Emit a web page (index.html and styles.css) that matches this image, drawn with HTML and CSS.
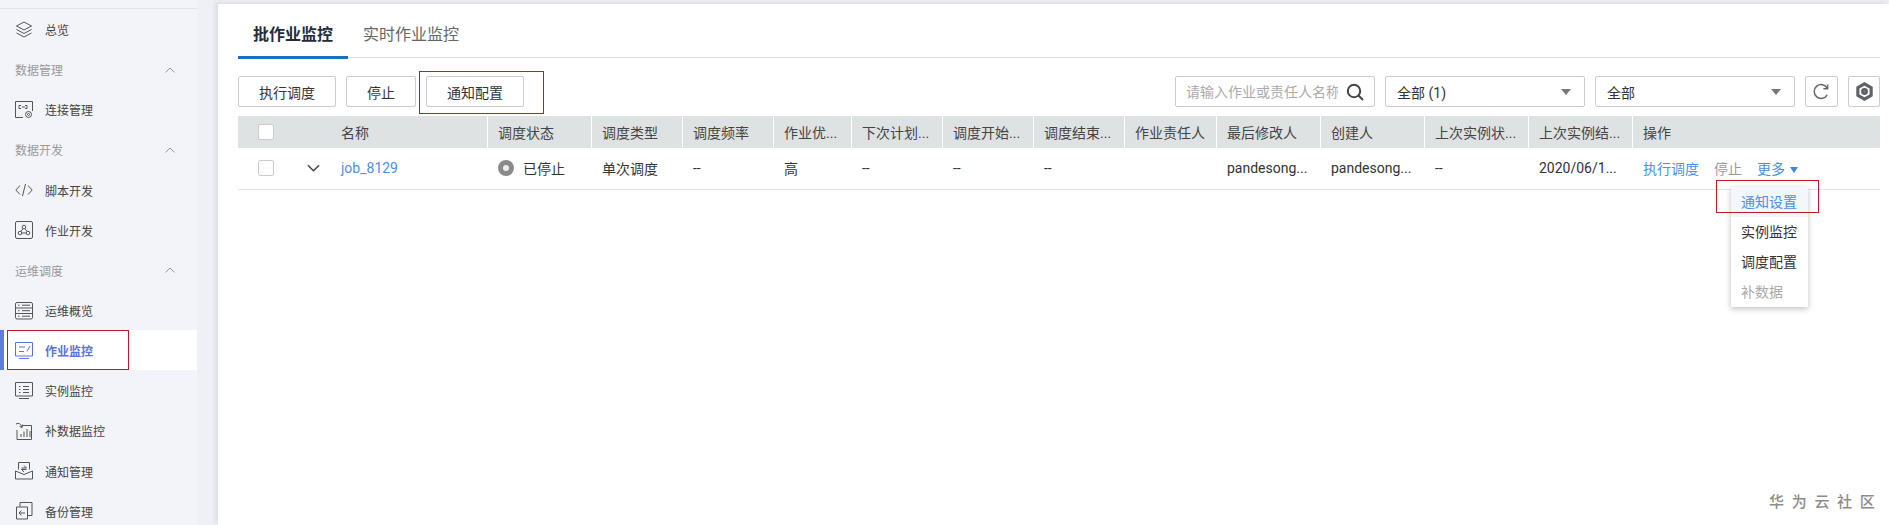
FILE: index.html
```html
<!DOCTYPE html>
<html lang="zh">
<head>
<meta charset="utf-8">
<title>作业监控</title>
<link rel="stylesheet" href="styles.css">
</head>
<body>
<div class="app">
  <aside class="side">
    <div class="item"><svg class="ic" viewBox="0 0 18 18"><path d="M9 1 16.500 5 9 9 1.500 5Z M1.500 8.500 9 12.500 16.500 8.500 M1.500 12 9 16 16.500 12"/></svg>总览</div>
    <div class="group">数据管理<svg class="chev" viewBox="0 0 10 6"><path d="M.5 5.500 5 1l4.500 4.500"/></svg></div>
    <div class="item"><svg class="ic" viewBox="0 0 18 18"><path d="M8 16.500H.5V.5h17V10M4 6V4.500h2M12 6V4.500h-2M4 6v1.500h2M12 6v1.500h-2M7 6h3"/><circle cx="13.500" cy="13.500" r="3"/><circle cx="13.500" cy="13.500" r="1"/></svg>连接管理</div>
    <div class="group">数据开发<svg class="chev" viewBox="0 0 10 6"><path d="M.5 5.500 5 1l4.500 4.500"/></svg></div>
    <div class="item"><svg class="ic" viewBox="0 0 18 18"><path d="M5 4.500.8 9 5 13.500M13 4.500 17.200 9 13 13.500M10.500 3 7.500 15"/></svg>脚本开发</div>
    <div class="item"><svg class="ic" viewBox="0 0 18 18"><rect x=".5" y=".5" width="17" height="17" rx="1.500"/><circle cx="9" cy="6" r="1.800"/><circle cx="5" cy="12" r="1.800"/><circle cx="13" cy="12" r="1.800"/><path d="M8 7.500 6 10.500M10 7.500l2 3M6.800 12h4.400"/></svg>作业开发</div>
    <div class="group">运维调度<svg class="chev" viewBox="0 0 10 6"><path d="M.5 5.500 5 1l4.500 4.500"/></svg></div>
    <div class="item"><svg class="ic" viewBox="0 0 18 18"><rect x=".5" y=".5" width="17" height="16.500" rx="1.500"/><path d="M.5 6h17M.5 11.500h17M3 3.200h1.500M7 3.200h8M3 8.700h1.500M7 8.700h8M3 14.200h1.500M7 14.200h8"/></svg>运维概览</div>
    <div class="item active"><svg class="ic" viewBox="0 0 18 18"><path d="M.5 14V.5h17V14ZM4 16.500h10M4 5h6M4 9.500h5M15 4l-3 5.500"/></svg>作业监控</div>
    <div class="item"><svg class="ic" viewBox="0 0 18 18"><path d="M.5 14V.5h17V14ZM4 16.500h10M4 4.500h1.500M8 4.500h6M4 7.500h1.500M8 7.500h6M4 10.500h1.500M8 10.500h6"/></svg>实例监控</div>
    <div class="item"><svg class="ic" viewBox="0 0 18 18"><path d="M7 3.500h9.500v14H2V8M1 2c3-1.500 5 0 6 3.500M7.500 2.500 7 5.500 4.500 4.500M6 15v-3M9 15V9.500M12 15V7M15 15V9"/></svg>补数据监控</div>
    <div class="item"><svg class="ic" viewBox="0 0 18 18"><path d="M3.500 7.500V.5h11v7M.5 9v8h17V9L9 12.500ZM6.500 6h5L9 3.500M11.500 7.500h-5L9 10"/></svg>通知管理</div>
    <div class="item"><svg class="ic" viewBox="0 0 18 18"><path d="M5 4.500V.5h12v13h-4M1.500 5h11v12h-11ZM10 11H4M6.500 8.500 4 11l2.500 2.500"/></svg>备份管理</div>
  </aside>
  <main class="main">
    <nav class="tabs">
      <div class="tab on">批作业监控</div>
      <div class="tab">实时作业监控</div>
    </nav>
    <div class="toolbar">
      <button class="btn wide">执行调度</button>
      <button class="btn">停止</button>
      <button class="btn wide">通知配置</button>
      <div class="tools">
        <div class="search">
          <input class="search-input" placeholder="请输入作业或责任人名称">
          <svg class="search-ic" viewBox="0 0 18 18"><circle cx="8" cy="8" r="6.200"/><path d="M12.500 12.500 17 17"/></svg>
        </div>
        <div class="select">全部 (1)<i class="caret"></i></div>
        <div class="select">全部<i class="caret"></i></div>
        <div class="icon-btn"><svg class="tool-ic" viewBox="0 0 18 18"><path d="M15 5.500A7.300 7.300 0 1 0 15 12.500M15.500 1.500V6H11"/></svg></div>
        <div class="icon-btn"><svg class="tool-ic gear" viewBox="0 0 18 18"><path d="M9 1.800 15.300 5.400v7.200L9 16.200 2.700 12.600V5.400Z"/><circle cx="9" cy="9" r="1.800"/></svg></div>
      </div>
    </div>
    <div class="table">
      <div class="row head">
        <div class="cell first"><span class="check"></span><span class="name-pad">名称</span></div>
        <div class="cell">调度状态</div>
        <div class="cell">调度类型</div>
        <div class="cell">调度频率</div>
        <div class="cell">作业优...</div>
        <div class="cell">下次计划...</div>
        <div class="cell">调度开始...</div>
        <div class="cell">调度结束...</div>
        <div class="cell">作业责任人</div>
        <div class="cell">最后修改人</div>
        <div class="cell">创建人</div>
        <div class="cell">上次实例状...</div>
        <div class="cell">上次实例结...</div>
        <div class="cell">操作</div>
      </div>
      <div class="row body">
        <div class="cell first"><span class="check"></span><svg class="expand" viewBox="0 0 14 8"><path d="M1 1l6 6 6-6"/></svg><a class="link">job_8129</a></div>
        <div class="cell"><span class="status"></span>已停止</div>
        <div class="cell">单次调度</div>
        <div class="cell">--</div>
        <div class="cell">高</div>
        <div class="cell">--</div>
        <div class="cell">--</div>
        <div class="cell">--</div>
        <div class="cell"></div>
        <div class="cell">pandesong...</div>
        <div class="cell">pandesong...</div>
        <div class="cell">--</div>
        <div class="cell">2020/06/1...</div>
        <div class="cell ops"><a class="link">执行调度</a><span class="muted">停止</span><a class="link">更多<i class="caret-b"></i></a></div>
      </div>
    </div>
  </main>
</div>
<ul class="menu">
  <li class="hover">通知设置</li>
  <li>实例监控</li>
  <li>调度配置</li>
  <li class="disabled">补数据</li>
</ul>
<div class="mark mark-nav"></div>
<div class="mark mark-btn"></div>
<div class="mark mark-menu"></div>
<div class="watermark">华为云社区</div>
</body>
</html>
```

FILE: styles.css
```css
* { box-sizing: border-box; }
html, body { margin: 0; height: 525px; overflow: hidden; }
body {
  font-family: Roboto, "Noto Sans CJK SC", sans-serif;
  font-size: 14px;
  color: #333;
  background: #eef0f5;
  position: relative;
}
.app { display: flex; height: 525px; }
.side {
  width: 197px;
  flex: none;
  padding-top: 9px;
  background: linear-gradient(#f3f4f9 8px, #e3e4e9 8px, #e3e4e9 9px, #f3f4f9 9px);
  font-size: 12px;
}
.item, .group {
  height: 40.15px;
  display: flex;
  align-items: center;
  padding: 1px 0 0 15px;
}
.item { color: #444; }
.group { color: #999; justify-content: space-between; padding-right: 22px; }
.ic {
  width: 18px;
  height: 18px;
  margin-right: 12px;
  fill: none;
  stroke: #555;
  stroke-width: 1;
  flex: none;
}
.chev { width: 10px; height: 6px; fill: none; stroke: #999; stroke-width: 1; }
.item.active {
  background: #fff;
  color: #5a73d8;
  font-weight: 700;
  box-shadow: inset 4px 0 0 #5c7fdc;
}
.item.active .ic { stroke: #5a73d8; }
.main {
  flex: 1;
  margin: 4px 0 0 21px;
  padding: 0 9px 0 20px;
  background: #fff;
  box-shadow: -3px -2px 5px rgba(0, 0, 0, .08);
}
.tabs {
  display: flex;
  height: 54px;
  border-bottom: 1px solid #dcdfe2;
}
.tab {
  padding: 0 15px;
  font-size: 16px;
  line-height: 61px;
  color: #666;
  height: 54px;
}
.tab.on {
  color: #252b3a;
  font-weight: 700;
  border-bottom: 3px solid #1e6fba;
  height: 55px;
  width: 110px;
}
.toolbar {
  display: flex;
  align-items: center;
  height: 31px;
  margin-top: 18px;
  gap: 10px;
}
.btn {
  height: 31px;
  width: 70px;
  padding: 0;
  background: #fff;
  border: 1px solid #c9ccd0;
  border-radius: 2px;
  font: inherit;
  color: #333;
}
.btn.wide { width: 98px; }
.tools { margin-left: auto; display: flex; gap: 10px; }
.search, .select, .icon-btn {
  height: 31px;
  background: #fff;
  border: 1px solid #c9ccd0;
  border-radius: 2px;
  display: flex;
  align-items: center;
}
.search { width: 200px; padding: 0 10px; }
.search-input {
  flex: 1;
  min-width: 0;
  width: 154px;
  border: 0;
  outline: 0;
  padding: 0;
  font: inherit;
  color: #333;
}
.search-input::placeholder { color: #aaa; opacity: 1; }
.search-ic { width: 18px; height: 18px; margin-left: 8px; flex: none; fill: none; stroke: #444; stroke-width: 2; }
.select { width: 200px; padding: 0 13px 0 11px; justify-content: space-between; }
.caret { width: 0; height: 0; border: 5px solid transparent; border-top: 6px solid #777; border-bottom: 0; }
.icon-btn { width: 33px; justify-content: center; }
.icon-btn + .icon-btn { width: 32px; }
.tool-ic { width: 17px; height: 17px; fill: none; stroke: #666; stroke-width: 1.600; }
.tool-ic.gear { width: 19px; height: 19px; stroke-width: 3; stroke: #5f6368; }
.table { margin-top: 9px; }
.row {
  display: grid;
  grid-template-columns: 250px 104px 91px 91px 78px 91px 91px 91px 92px 104px 104px 104px 104px 1fr;
}
.head { height: 32px; background: #dfe2e3; color: #444; }
.head .cell { border-right: 1px solid #fff; }
.head .cell:last-child { border-right: 0; }
.body { height: 42px; border-bottom: 1px solid #dfe1e3; padding-bottom: 2px; }
.cell {
  display: flex;
  align-items: center;
  padding-left: 10px;
  white-space: nowrap;
  overflow: hidden;
}
.cell.first { padding-left: 20px; }
.check {
  width: 16px;
  height: 16px;
  background: #fff;
  border: 1px solid #c9ccd0;
  border-radius: 2px;
  flex: none;
}
.name-pad { margin-left: 67px; }
.expand { width: 13px; height: 8px; margin: 0 21px 0 33px; fill: none; stroke: #444; stroke-width: 1.600; flex: none; }
.link { color: #4d8fe0; }
.status {
  width: 16px;
  height: 16px;
  margin-right: 9px;
  border-radius: 50%;
  border: 5px solid #8a8a8a;
  background: #eee;
  flex: none;
}
.ops { gap: 15px; }
.muted { color: #999; }
.caret-b {
  display: inline-block;
  margin-left: 5px;
  vertical-align: 1px;
  border: 4.500px solid transparent;
  border-top: 6px solid #3f87dc;
  border-bottom: 0;
}
.menu {
  position: absolute;
  left: 1731px;
  top: 187px;
  width: 77px;
  margin: 0;
  padding: 0;
  list-style: none;
  background: #fff;
  box-shadow: 0 2px 6px rgba(0, 0, 0, .25);
}
.menu li { height: 30px; line-height: 30px; padding-left: 10px; color: #333; }
.menu li.hover { background: #f3f6fb; color: #4d8fe0; }
.menu li.disabled { color: #aaa; }
.mark { position: absolute; border: 1px solid #c0172c; }
.mark-nav { left: 7px; top: 330px; width: 122px; height: 40px; }
.mark-btn { left: 419px; top: 71px; width: 125px; height: 43px; }
.mark-menu { left: 1716px; top: 180px; width: 103px; height: 33px; }
.watermark {
  position: absolute;
  left: 1769px;
  top: 491px;
  font-size: 15px;
  line-height: 22px;
  letter-spacing: 7.7px;
  color: #8c8c8c;
  font-weight: 500;
  white-space: nowrap;
}
```
